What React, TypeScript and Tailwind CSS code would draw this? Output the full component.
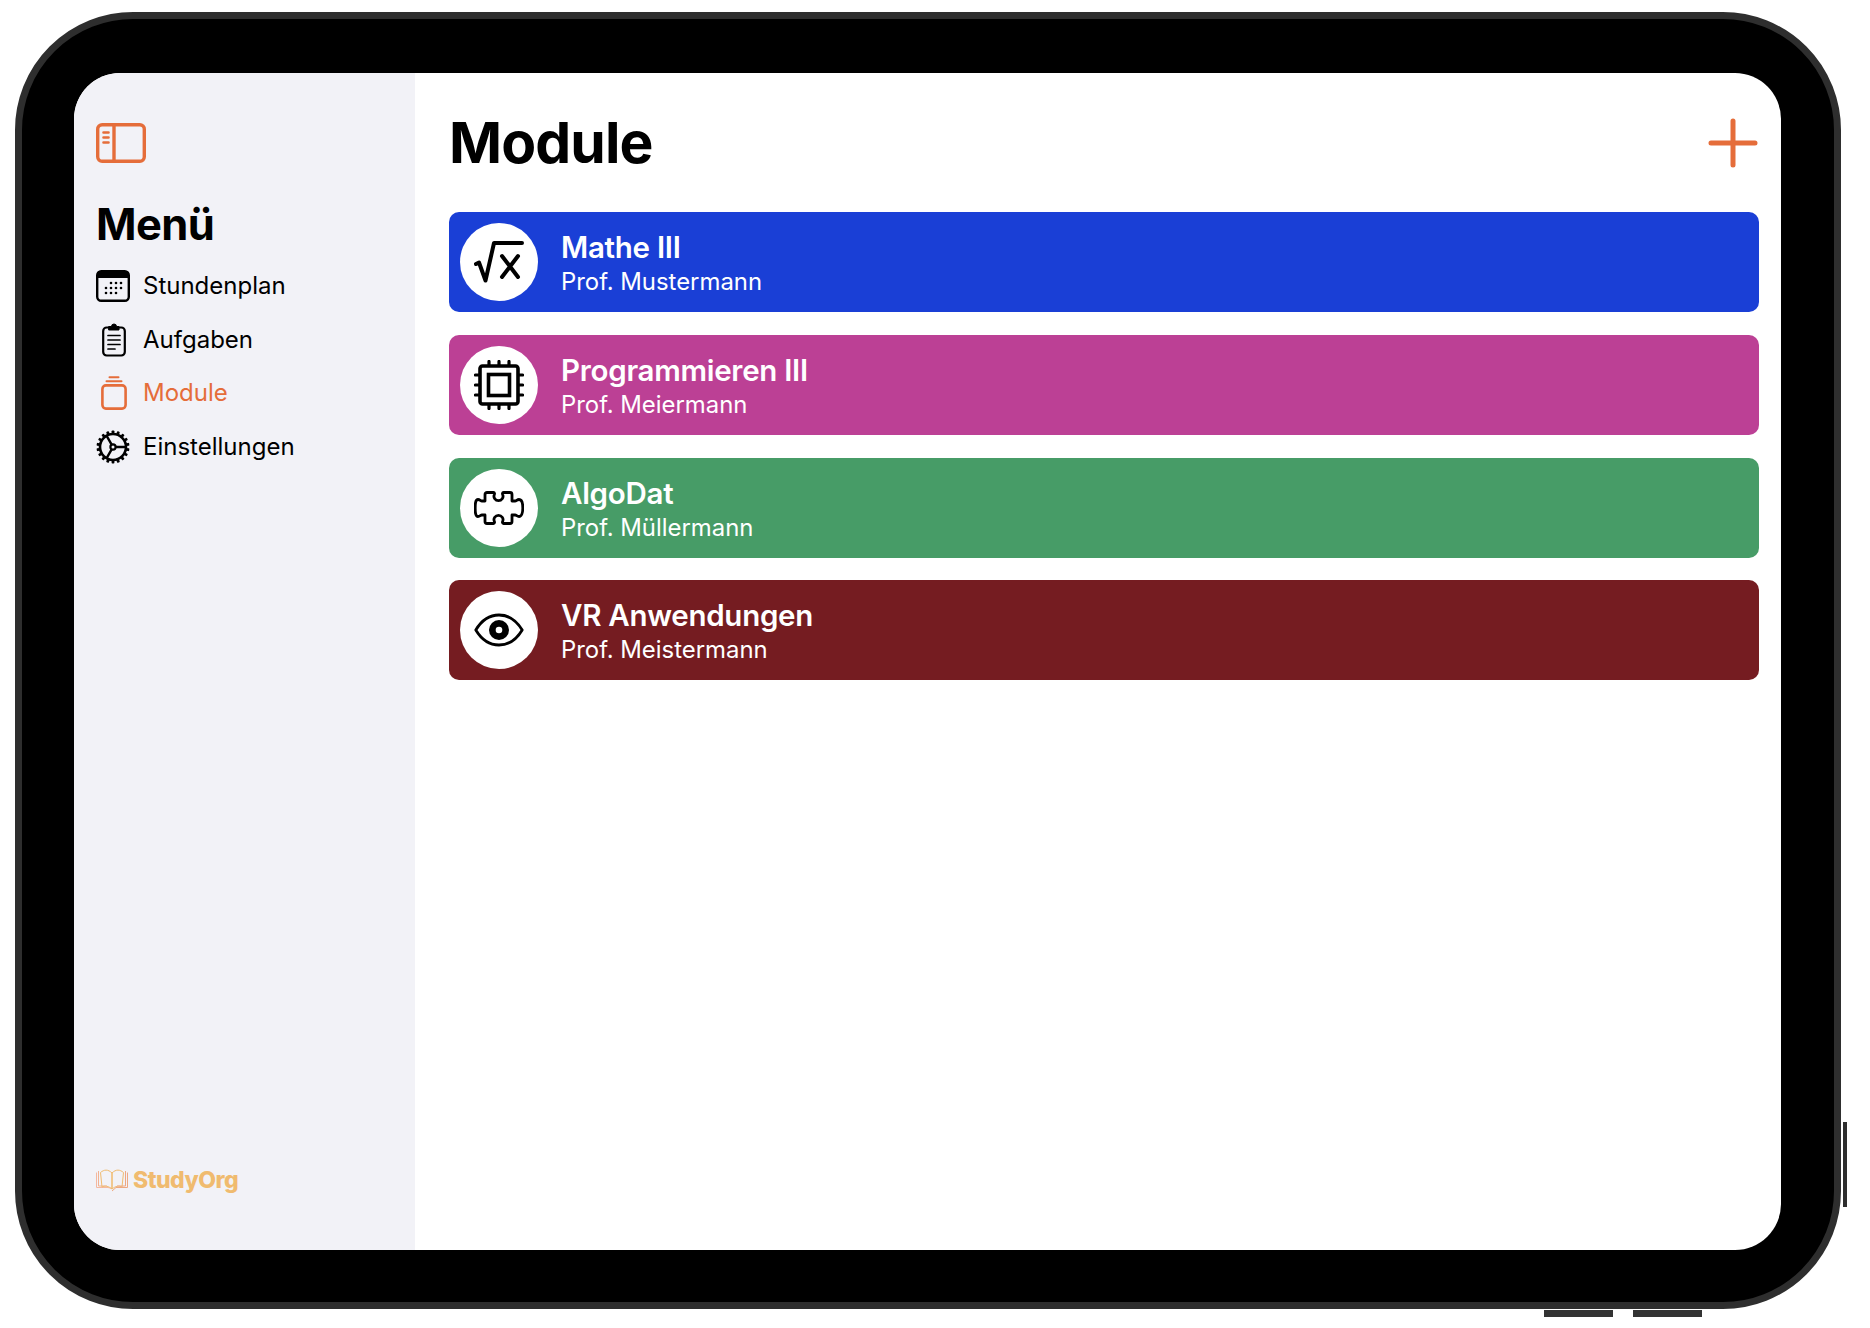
import React from "react";

const SidebarToggle = () => (
  <svg width="50" height="40" viewBox="0 0 50 40" fill="none" stroke="#e56d3a" strokeWidth="3.4" strokeLinecap="round">
    <rect x="1.7" y="1.7" width="46.6" height="36.6" rx="4.5" />
    <path d="M18 1.7V38.3" />
    <path d="M7.5 9.5H12.5M7.5 14.5H12.5M7.5 19.5H12.5" strokeWidth="2.6" />
  </svg>
);

const CalendarIcon = () => (
  <svg width="34" height="32" viewBox="0 0 34 32" fill="none">
    <rect x="1.2" y="1.2" width="31.6" height="29.6" rx="4" stroke="#000" strokeWidth="2.4" />
    <path d="M1 8V5a4 4 0 0 1 4-4h24a4 4 0 0 1 4 4v3z" fill="#000" />
    {[[15, 13], [20, 13], [25, 13], [10, 18], [15, 18], [20, 18], [25, 18], [10, 23], [15, 23], [20, 23]].map(([x, y]) => (
      <circle key={`${x}-${y}`} cx={x} cy={y} r="1.3" fill="#000" />
    ))}
  </svg>
);

const ClipboardIcon = () => (
  <svg width="24" height="34" viewBox="0 0 24 34" fill="none" stroke="#000" strokeLinecap="round">
    <rect x="1.2" y="4.5" width="21.6" height="28" rx="3.5" strokeWidth="2.2" />
    <path d="M7 3.5H9.5a2.5 2.5 0 0 1 5 0H17V7H7z" fill="#000" strokeWidth="1" />
    <path d="M6 12.5H18M6 17H18M6 21.5H18M6 26H13" strokeWidth="1.7" />
  </svg>
);

const ModuleIcon = () => (
  <svg width="26" height="34" viewBox="0 0 26 34" fill="none" stroke="#e56d3a" strokeLinecap="round">
    <rect x="1.4" y="9.4" width="23.2" height="23.2" rx="3.5" strokeWidth="2.6" />
    <path d="M5.5 5.3H20.5" strokeWidth="2" />
    <path d="M8.5 1.3H17.5" strokeWidth="2" />
  </svg>
);

const GearIcon = () => (
  <svg width="34" height="34" viewBox="0 0 34 34" fill="none" stroke="#000">
    <circle cx="17" cy="17" r="13" strokeWidth="2.6" />
    {Array.from({ length: 18 }).map((_, i) => (
      <rect key={i} x="15.6" y="0.5" width="2.8" height="4" rx="0.8" fill="#000" stroke="none" transform={`rotate(${i * 20} 17 17)`} />
    ))}
    <circle cx="17" cy="17" r="2.6" strokeWidth="2.2" />
    <path d="M19.5 17H30M15.8 19.2L10.5 28.3M15.8 14.8L10.5 5.7" strokeWidth="2.4" />
  </svg>
);

const SqrtIcon = () => (
  <svg width="50" height="42" viewBox="0 0 50 42" fill="none" stroke="#000" strokeWidth="4" strokeLinecap="round" strokeLinejoin="round">
    <path d="M2 23L5 21.5L11.5 39.5L20 2H48" />
    <path d="M28 15L44 36M44 15L28 36" />
  </svg>
);

const CpuIcon = () => (
  <svg width="50" height="50" viewBox="0 0 50 50" fill="none" stroke="#000">
    <rect x="6" y="6" width="38" height="38" rx="2.5" strokeWidth="3.6" />
    <rect x="14.5" y="14.5" width="21" height="21" strokeWidth="3.6" />
    <path
      d="M15 1.5V5M25 1.5V5M35 1.5V5M15 45V48.5M25 45V48.5M35 45V48.5M1.5 15H5M1.5 25H5M1.5 35H5M45 15H48.5M45 25H48.5M45 35H48.5"
      strokeWidth="3.2"
      strokeLinecap="round"
    />
  </svg>
);

const PuzzleIcon = () => (
  <svg width="50" height="34" viewBox="0 0 50 34" fill="none" stroke="#000" strokeWidth="2.8" strokeLinejoin="round">
    <path d="M11 10V3.5a2 2 0 0 1 2-2H19.5c1.2 0 1.2 1.2.8 2.2c-1.2 2.8 1 6 4.2 6s5.4-3.2 4.2-6c-.4-1-.4-2.2.8-2.2H36a2 2 0 0 1 2 2V10H41C42.5 10 43 8.5 45 8.5C47.5 8.5 48.8 12.5 48.8 17S47.5 25.5 45 25.5C43 25.5 42.5 24 41 24H38V30.5a2 2 0 0 1-2 2H29.5c-1.2 0-1.2-1.2-.8-2.2c1.2-2.8-1-6-4.2-6s-5.4 3.2-4.2 6c.4 1 .4 2.2-.8 2.2H13a2 2 0 0 1-2-2V24H8C6.5 24 6 25.5 4 25.5C1.5 25.5 1.2 21.5 1.2 17S1.5 8.5 4 8.5C6 8.5 6.5 10 8 10Z" />
  </svg>
);

const EyeIcon = () => (
  <svg width="50" height="34" viewBox="0 0 50 34" fill="none">
    <path d="M1.8 17C7.5 7.5 15.5 2 25 2s17.5 5.5 23.2 15C42.5 26.5 34.5 32 25 32S7.5 26.5 1.8 17z" stroke="#000" strokeWidth="2.8" strokeLinejoin="round" />
    <circle cx="25" cy="17" r="10" fill="#000" />
    <circle cx="25" cy="17" r="3.3" fill="#fff" />
  </svg>
);

const BookLogo = () => (
  <svg width="32" height="24" viewBox="0 0 32 24" fill="none" strokeWidth="1" strokeLinejoin="round">
    <path d="M0.5 4.5V19.5H12L16 20.5" stroke="#f4b8a0" />
    <path d="M2.5 3V18H11" stroke="#f2b290" />
    <path d="M4.5 4.5C8 1.5 12 1 16 5V21C12.5 18 8.5 17.5 6 19z" stroke="#f0bb6f" />
    <path d="M27.5 4.5C24 1.5 20 1 16 5V21C19.5 18 23.5 17.5 26 19z" stroke="#f0bb6f" />
    <path d="M29.5 3V18H21M31.5 4.5V19.5H20L16 23" stroke="#eda882" />
  </svg>
);

const nav = [
  { label: "Stundenplan", icon: <CalendarIcon /> },
  { label: "Aufgaben", icon: <div className="ml-[2px]"><ClipboardIcon /></div> },
  { label: "Module", icon: <div className="ml-[1px]"><ModuleIcon /></div>, active: true },
  { label: "Einstellungen", icon: <GearIcon /> },
];

const modules = [
  { title: "Mathe III", prof: "Prof. Mustermann", bg: "bg-[#1a3fd6]", icon: <SqrtIcon /> },
  { title: "Programmieren III", prof: "Prof. Meiermann", bg: "bg-[#bc4095]", icon: <CpuIcon /> },
  { title: "AlgoDat", prof: "Prof. Müllermann", bg: "bg-[#479c67]", icon: <PuzzleIcon /> },
  { title: "VR Anwendungen", prof: "Prof. Meistermann", bg: "bg-[#751c21]", icon: <EyeIcon /> },
];

export default function App() {
  return (
    <div className="w-[1870px] h-[1328px] bg-white overflow-hidden pt-[12px] pl-[15px] font-['Inter',sans-serif]">
      <div className="relative w-[1826px] h-[1297px]">
        <div className="w-full h-full rounded-[118px] border-[7px] border-[#2e2e2e] bg-black pt-[54px] pb-[52px] pl-[52px] pr-[53px]">
          <div className="flex h-full rounded-[46px] overflow-hidden bg-white">
            <aside className="w-[341px] shrink-0 bg-[#f2f2f7] flex flex-col pl-[23px] pt-[50px] pb-[56px]">
              <div className="-ml-px">
                <SidebarToggle />
              </div>
              <h2 className="mt-[30px] -ml-[1px] text-[43.5px] leading-[62px] font-bold text-black tracking-[-0.6px]">Menü</h2>
              <nav className="mt-[4px] flex flex-col -ml-[1px]">
                {nav.map((item) => (
                  <div key={item.label} className="flex items-center h-[53.7px]">
                    <div className="w-[34px] flex justify-center">{item.icon}</div>
                    <span className="ml-[13px] text-[24px]" style={{ color: item.active ? "#e56d3a" : "#000" }}>{item.label}</span>
                  </div>
                ))}
              </nav>
              <div className="mt-auto flex items-center gap-[5px] -ml-px">
                <BookLogo />
                <span className="text-[23px] leading-[28px] font-extrabold tracking-[-0.5px] text-[#f0bb6f]">StudyOrg</span>
              </div>
            </aside>
            <main className="flex-1 pl-[34px] pr-[22px] pt-[36px]">
              <div className="flex items-center justify-between h-[68px]">
                <h1 className="text-[57px] leading-[68px] font-bold text-black tracking-[-0.9px]">Module</h1>
                <svg width="50" height="50" viewBox="0 0 50 50" fill="none" stroke="#e56d3a" strokeWidth="5" strokeLinecap="round" className="mr-[1px]">
                  <path d="M25 3V47M3 25H47" />
                </svg>
              </div>
              <div className="mt-[35px] flex flex-col gap-[22.8px]">
                {modules.map((m) => (
                  <div key={m.title} className={`${m.bg} h-[100px] rounded-[10px] flex items-center pl-[11px] text-white`}>
                    <div className="w-[78px] h-[78px] rounded-full bg-white flex items-center justify-center">{m.icon}</div>
                    <div className="ml-[23px] pt-[3px] flex flex-col">
                      <span className="text-[29.5px] leading-[36px] font-semibold tracking-[-0.28px]">{m.title}</span>
                      <span className="text-[23.9px] leading-[33px]">{m.prof}</span>
                    </div>
                  </div>
                ))}
              </div>
            </main>
          </div>
        </div>
        <div className="absolute left-[1828px] top-[1110px] w-[4px] h-[85px] bg-[#2e2e2e]" />
        <div className="absolute left-[1529px] top-[1298px] w-[69px] h-[7px] bg-[#333]" />
        <div className="absolute left-[1618px] top-[1298px] w-[69px] h-[7px] bg-[#333]" />
      </div>
    </div>
  );
}
